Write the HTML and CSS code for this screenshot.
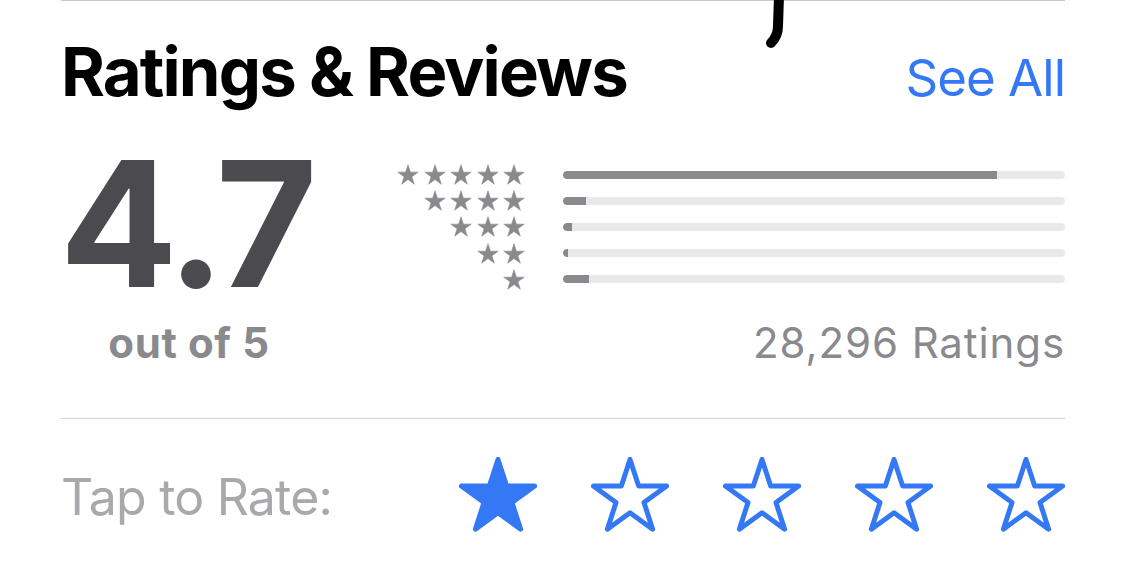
FILE: index.html
```html
<!DOCTYPE html>
<html lang="en">
<head>
<meta charset="utf-8">
<title>Ratings &amp; Reviews</title>
<link rel="stylesheet" href="styles.css">
</head>
<body>
<div class="page">
  <div class="top-rule"></div>
  <svg class="scribble" width="30" height="60" viewBox="760 0 30 60"><path d="M779,-4 L778,26 Q778,36 771,43" fill="none" stroke="#000" stroke-width="10" stroke-linecap="round"/></svg>

  <header class="header">
    <h2 class="title">Ratings &amp; Reviews</h2>
    <a class="see-all">See All</a>
  </header>

  <section class="summary">
    <div class="score">
      <div class="score-value">4.7</div>
      <div class="score-sub">out of 5</div>
    </div>
    <div class="dist">
      <div class="dist-rows">
        <div class="dist-row">
          <div class="mini-stars">
            <svg class="mini" viewBox="0 0 78 75"><use href="#star"/></svg><svg class="mini" viewBox="0 0 78 75"><use href="#star"/></svg><svg class="mini" viewBox="0 0 78 75"><use href="#star"/></svg><svg class="mini" viewBox="0 0 78 75"><use href="#star"/></svg><svg class="mini" viewBox="0 0 78 75"><use href="#star"/></svg>
          </div>
          <div class="bar"><div class="bar-fill" style="width:86.5%"></div></div>
        </div>
        <div class="dist-row">
          <div class="mini-stars">
            <svg class="mini" viewBox="0 0 78 75"><use href="#star"/></svg><svg class="mini" viewBox="0 0 78 75"><use href="#star"/></svg><svg class="mini" viewBox="0 0 78 75"><use href="#star"/></svg><svg class="mini" viewBox="0 0 78 75"><use href="#star"/></svg>
          </div>
          <div class="bar"><div class="bar-fill" style="width:4.6%"></div></div>
        </div>
        <div class="dist-row">
          <div class="mini-stars">
            <svg class="mini" viewBox="0 0 78 75"><use href="#star"/></svg><svg class="mini" viewBox="0 0 78 75"><use href="#star"/></svg><svg class="mini" viewBox="0 0 78 75"><use href="#star"/></svg>
          </div>
          <div class="bar"><div class="bar-fill" style="width:1.8%"></div></div>
        </div>
        <div class="dist-row">
          <div class="mini-stars">
            <svg class="mini" viewBox="0 0 78 75"><use href="#star"/></svg><svg class="mini" viewBox="0 0 78 75"><use href="#star"/></svg>
          </div>
          <div class="bar"><div class="bar-fill" style="width:1%"></div></div>
        </div>
        <div class="dist-row">
          <div class="mini-stars">
            <svg class="mini" viewBox="0 0 78 75"><use href="#star"/></svg>
          </div>
          <div class="bar"><div class="bar-fill" style="width:5.2%"></div></div>
        </div>
      </div>
      <div class="count">28,296 Ratings</div>
    </div>
  </section>

  <div class="divider"></div>

  <section class="rate">
    <div class="rate-label">Tap to Rate:</div>
    <div class="rate-stars">
      <svg class="big-star filled" viewBox="0 0 78 75"><use href="#star"/></svg>
      <svg class="big-star" viewBox="0 0 78 75"><use href="#star"/></svg>
      <svg class="big-star" viewBox="0 0 78 75"><use href="#star"/></svg>
      <svg class="big-star" viewBox="0 0 78 75"><use href="#star"/></svg>
      <svg class="big-star" viewBox="0 0 78 75"><use href="#star"/></svg>
    </div>
  </section>
</div>

<svg class="defs" width="0" height="0">
  <defs>
    <polygon id="star" points="39,2.5 47.65,29.1 75.62,29.1 52.99,45.55 61.63,72.15 39,55.71 16.37,72.15 25.01,45.55 2.38,29.1 30.35,29.1"/>
  </defs>
</svg>
</body>
</html>
```

FILE: styles.css
```css
html, body {
  margin: 0;
  padding: 0;
  background: #ffffff;
}

body {
  font-family: Inter, "Noto Sans", "Liberation Sans", sans-serif;
  width: 1125px;
  height: 572px;
  overflow: hidden;
}

.page {
  position: relative;
  padding: 0 60px 0 61px;
}

.top-rule {
  height: 1px;
  background: #c8c8cc;
}

.scribble {
  position: absolute;
  left: 760px;
  top: 0;
}

.defs {
  position: absolute;
}

.header {
  display: flex;
  justify-content: space-between;
  align-items: baseline;
  height: 117px;
}

.title {
  margin: 0;
  font-size: 67px;
  font-weight: 700;
  line-height: 80px;
  padding-top: 31px;
  color: #000;
  letter-spacing: -1.85px;
}

.see-all {
  font-size: 51px;
  font-weight: 400;
  color: #3478f6;
  letter-spacing: -1px;
}

.summary {
  display: flex;
  height: 300px;
}

.score {
  width: 256px;
  display: flex;
  flex-direction: column;
  align-items: center;
}

.score-value {
  font-size: 175px;
  font-weight: 700;
  line-height: 140px;
  color: #4a4a4f;
  letter-spacing: -5px;
  margin-top: 35px;
  margin-left: -6px;
}

.score-sub {
  font-size: 42px;
  font-weight: 700;
  line-height: 46px;
  color: #8a8a8e;
  letter-spacing: 0.6px;
  margin-top: 27px;
}

.dist {
  flex: 1;
  display: flex;
  flex-direction: column;
  align-items: flex-end;
}

.dist-rows {
  display: flex;
  flex-direction: column;
  gap: 5.2px;
  padding-top: 46px;
}

.dist-row {
  display: flex;
  align-items: center;
  height: 21px;
  gap: 38px;
}

.mini-stars {
  display: flex;
  justify-content: flex-end;
  gap: 4.5px;
  width: 130px;
}

.mini {
  width: 22px;
  height: 21px;
  fill: #8a8a8e;
  stroke: #8a8a8e;
  stroke-width: 2;
  stroke-linejoin: round;
}

.bar {
  width: 502px;
  height: 8px;
  border-radius: 4px;
  background: #e9e9eb;
  overflow: hidden;
}

.bar-fill {
  height: 100%;
  background: #8a8a8e;
  border-radius: 4px 0 0 4px;
}

.count {
  margin-top: 28px;
  font-size: 42px;
  line-height: 50px;
  color: #8a8a8e;
  letter-spacing: 0.9px;
}

.divider {
  height: 1px;
  background: #d1d1d6;
}

.rate {
  display: flex;
  align-items: center;
  justify-content: space-between;
  height: 152px;
}

.rate-label {
  font-size: 50px;
  color: #a9a9ad;
  letter-spacing: -0.8px;
  margin-top: 4px;
}

.rate-stars {
  display: flex;
  gap: 54px;
  margin-top: -2px;
}

.big-star {
  width: 78px;
  height: 75px;
  fill: none;
  stroke: #3478f6;
  stroke-width: 5;
  stroke-linejoin: round;
}

.big-star.filled {
  fill: #3478f6;
}
```
